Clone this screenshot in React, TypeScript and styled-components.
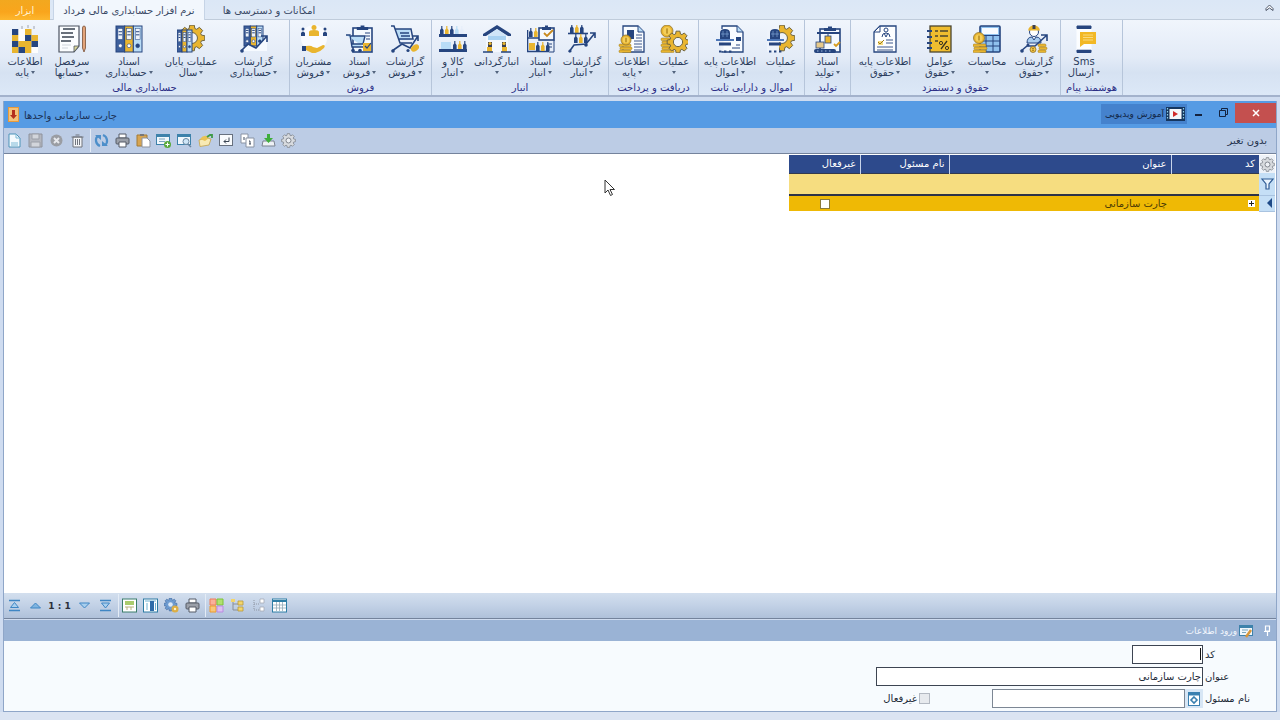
import React from 'react';
import styled, { createGlobalStyle } from 'styled-components';

const N = '#26457f';
const Y = '#e9b52f';
const L = '#b9dcf6';

const GlobalStyle = createGlobalStyle`
  *, *::before, *::after { box-sizing: border-box; }
  body { margin: 0; background: #cfdcf0; font-family: "DejaVu Sans", sans-serif; font-size: 10px; color: #2b3c5c; }
  button, input { font: inherit; color: inherit; margin: 0; padding: 0; border: 0; background: none; }
  button { cursor: default; }
  svg { display: block; flex: none; }
`;

const Page = styled.div`
  min-height: 100vh;
  display: flex;
  flex-direction: column;
  position: relative;
  overflow: hidden;
`;

/* ---------- ribbon ---------- */

const TabBar = styled.nav`
  height: 20px;
  flex: none;
  display: flex;
  background: linear-gradient(#dbe7f6, #dfe9f6);
  border-bottom: 1px solid #c0ccdb;
`;

const Tab = styled.button<{ $kind?: 'tool' | 'active'; $w: number }>`
  width: ${p => p.$w}px;
  height: 20px;
  direction: rtl;
  white-space: nowrap;
  color: ${p => (p.$kind === 'tool' ? '#fff3d0' : '#3a4a66')};
  background: ${p => (p.$kind === 'tool' ? 'linear-gradient(#f2a81f, #f9a51c 60%, #fdb72e)' : p.$kind === 'active' ? '#f2f7fd' : 'transparent')};
  border: ${p => (p.$kind === 'active' ? '1px solid #c6d4e6' : '0')};
  border-bottom: 0;
  border-top: 0;
  margin-right: ${p => (p.$kind === 'tool' ? 3 : 0)}px;
`;

const Collapse = styled.button`
  margin-left: auto;
  width: 22px;
  height: 16px;
  display: grid;
  place-items: center;
`;

const Ribbon = styled.div`
  height: 77px;
  flex: none;
  display: flex;
  background: linear-gradient(#f0f5fc, #e3ebf7 50%, #d6e2f2 70%, #dce8f7);
  border-bottom: 2px solid #a3b2cc;
`;

const Group = styled.section<{ $w: number }>`
  width: ${p => p.$w}px;
  flex: none;
  border-right: 1px solid #b6c5da;
  display: flex;
  flex-direction: column;
`;

const GroupItems = styled.div`
  display: flex;
  height: 61px;
`;

const GroupTitle = styled.h2`
  margin: 0;
  font-size: 10px;
  line-height: 15px;
  font-weight: 400;
  text-align: center;
  direction: rtl;
  color: #2c2f86;
  white-space: nowrap;
`;

const BigButton = styled.button<{ $w: number }>`
  width: ${p => p.$w}px;
  flex: none;
  padding-top: 5px;
  display: flex;
  flex-direction: column;
  align-items: center;
  font-size: 10px;
  line-height: 11px;
  white-space: nowrap;
`;

const Caption = styled.span`
  margin-top: 3px;
  direction: rtl;
`;

const SubCaption = styled.span`
  display: flex;
  align-items: center;
  gap: 2px;
  height: 11px;
`;

const Arrow = styled.span`
  border: 2px solid transparent;
  border-top: 3px solid #53647e;
  border-bottom: 0;
`;

/* ---------- window ---------- */

const Window = styled.main`
  flex: 1;
  display: flex;
  flex-direction: column;
  margin: 4px 3px 0;
  border: 1px solid #8fa6c8;
  border-top: 0;
`;

const TitleBar = styled.header`
  height: 27px;
  flex: none;
  display: flex;
  align-items: center;
  background: #569be4;
  padding-left: 4px;
`;

const WindowTitle = styled.h1`
  margin: 0 auto 0 5px;
  font-size: 10px;
  font-weight: 400;
  direction: rtl;
  color: #1c3358;
  padding-top: 1px;
`;

const VideoLink = styled.a`
  display: flex;
  align-items: center;
  gap: 2px;
  height: 20px;
  width: 86px;
  padding: 0 2px;
  justify-content: flex-end;
  background: #4582cd;
  color: #122748;
  text-decoration: none;
  font-size: 9px;
  white-space: nowrap;
  margin-bottom: 2px;
`;

const WinButton = styled.button<{ $close?: boolean }>`
  width: ${p => (p.$close ? 41 : 24)}px;
  height: 20px;
  margin-bottom: 4px;
  display: grid;
  place-items: center;
  background: ${p => (p.$close ? '#c4504f' : 'transparent')};
`;

const ToolBar = styled.div<{ $bottom?: boolean }>`
  height: 26px;
  flex: none;
  display: flex;
  align-items: center;
  background: ${p => (p.$bottom ? 'linear-gradient(#d3dfee, #c2d1e6 50%, #afc1da)' : '#bccce5')};
  border-bottom: 1px solid #74839c;
`;

const ToolGroup = styled.div<{ $sep?: boolean }>`
  display: flex;
  align-items: center;
  gap: 1px;
  height: 23px;
  padding-right: ${p => (p.$sep ? 3 : 0)}px;
  border-right: ${p => (p.$sep ? '1px solid #e4ecf6' : '0')};
`;

const ToolButton = styled.button`
  width: 20px;
  height: 20px;
  display: grid;
  place-items: center;
`;

const Counter = styled.output`
  width: 27px;
  text-align: center;
  font-size: 9px;
  font-weight: 700;
  color: #2b2f3a;
`;

const Status = styled.span`
  margin-left: auto;
  padding-right: 9px;
  direction: rtl;
  color: #26344f;
`;

const Content = styled.div`
  flex: 1;
  background: #fff;
  direction: rtl;
  padding: 1px 1px 0 0;
`;

const Table = styled.table`
  border-collapse: collapse;
  table-layout: fixed;
  width: 486px;
  direction: rtl;
  font-size: 10px;
`;

const Head = styled.th`
  height: 18px;
  padding: 0 4px;
  text-align: right;
  font-weight: 400;
  color: #fff;
  background: #2d4a8c;
  border-left: 1px solid #c8d4ea;
  &:last-child { border-left: 0; }
`;

const Corner = styled.th`
  padding: 0;
  background: #eef2f8;
`;

const FilterCell = styled.td`
  height: 22px;
  padding: 0;
  background: #f6dd80;
  border-top: 1px solid #333a4d;
  border-bottom: 2px solid #2c3247;
`;

const SideCell = styled.td`
  padding: 0;
  background: #c5dff6;
  border-bottom: 1px solid #a9c3e0;
`;

const Cell = styled.td`
  height: 16px;
  padding: 0 4px;
  background: #efb905;
  color: #4a3a05;
`;

const RowCheck = styled.input`
  appearance: none;
  display: block;
  width: 10px;
  height: 10px;
  margin: 0 auto;
  background: #fff;
  border: 1px solid #8a7a3a;
`;

const Expander = styled.button`
  display: block;
  width: 7px;
  height: 7px;
  background: #fff;
`;

/* ---------- entry panel ---------- */

const PanelHead = styled.header`
  margin-top: 1px;
  height: 21px;
  flex: none;
  display: flex;
  align-items: center;
  gap: 2px;
  direction: rtl;
  padding-right: 5px;
  background: #9ab3d5;
  color: #f3f7fd;
`;

const PanelTitle = styled.h2`
  margin: 0;
  font-size: 9px;
  font-weight: 400;
`;

const Pin = styled.button`
  width: 8px;
  height: 12px;
  margin-left: 8px;
`;

const Form = styled.form`
  flex: none;
  direction: rtl;
  background: #f7fbfe;
  display: flex;
  flex-direction: column;
  gap: 3px;
  padding: 4px 0 3px;
  color: #222a38;
`;

const FieldRow = styled.div`
  display: flex;
  align-items: center;
  height: 19px;
`;

const Label = styled.label`
  width: 73px;
  text-align: left;
  padding-left: 2px;
`;

const Box = styled.input<{ $w: number; $soft?: boolean }>`
  width: ${p => p.$w}px;
  height: 19px;
  padding: 0 1px;
  background: #fff;
  border: 1px solid ${p => (p.$soft ? '#7d8794' : '#3d4552')};
`;

const CodeWrap = styled.span`
  position: relative;
  display: flex;
`;

const TextCaret = styled.i`
  position: absolute;
  right: 2px;
  top: 3px;
  width: 1px;
  height: 12px;
  background: #111;
`;

const Lookup = styled.button`
  width: 18px;
  height: 19px;
  display: grid;
  place-items: center;
  background: #d7e6f5;
`;

const CheckLabel = styled.label`
  display: flex;
  align-items: center;
  gap: 2px;
  margin-right: 62px;
`;

const SoftCheck = styled.input`
  appearance: none;
  width: 11px;
  height: 11px;
  background: #e7eaee;
  border: 1px solid #b3b9c2;
`;

const BottomStrip = styled.footer`
  height: 8px;
  flex: none;
  background: #dbe4f2;
`;

const Pointer = styled.svg`
  position: absolute;
  left: 604px;
  top: 179px;
`;

/* ---------- drawings ---------- */

const Svg = ({ s = 28, v = 28, children }: { s?: number; v?: number; children: React.ReactNode }) => (
  <svg width={s} height={s} viewBox={`0 0 ${v} ${v}`} fill="none" aria-hidden="true">{children}</svg>
);

const gearPath = (cx: number, cy: number, r: number, teeth = 8) => {
  const pts: string[] = [];
  for (let i = 0; i < teeth; i++) {
    const a = (i * 2 * Math.PI) / teeth;
    const step = Math.PI / teeth;
    [[-0.75, 0.76], [-0.45, 1], [0.45, 1], [0.75, 0.76]].forEach(([o, k]) => {
      pts.push(`${(cx + Math.cos(a + o * step) * r * k).toFixed(2)} ${(cy + Math.sin(a + o * step) * r * k).toFixed(2)}`);
    });
  }
  return `M${pts.join('L')}Z`;
};

const Gear = ({ cx, cy, r, fill = Y, hole = '#eef3fb' }: { cx: number; cy: number; r: number; fill?: string; hole?: string }) => (
  <>
    <path d={gearPath(cx, cy, r)} fill={fill} stroke="#6f6540" strokeWidth="1" />
    <circle cx={cx} cy={cy} r={r * 0.42} fill={hole} stroke="#6f6540" strokeWidth="1" />
  </>
);

const Coins = ({ x, y, n = 3, w = 11 }: { x: number; y: number; n?: number; w?: number }) => (
  <>
    {Array.from({ length: n }, (_, i) => (
      <rect key={i} x={x + (i % 2)} y={y - i * 3} width={w} height="2.6" rx="1.2" fill={Y} stroke="#a88428" strokeWidth="0.6" />
    ))}
  </>
);

const Coin = ({ cx, cy, r = 5 }: { cx: number; cy: number; r?: number }) => (
  <>
    <circle cx={cx} cy={cy} r={r} fill={Y} stroke="#8f7430" strokeWidth="0.8" />
    <circle cx={cx} cy={cy} r={r * 0.65} fill="#f5cf5a" />
    <path d={`M${cx} ${cy - r * 0.5}v${r}M${cx - 1} ${cy - 1}h2M${cx - 1} ${cy + 1}h2`} stroke="#a87d18" strokeWidth="0.8" />
  </>
);

const Binders = ({ x, y, w, h }: { x: number; y: number; w: number; h: number }) => (
  <>
    {['#3c5f9c', Y, L].map((c, i) => {
      const bw = w / 3;
      const bx = x + i * bw;
      return (
        <g key={i}>
          <rect x={bx} y={y} width={bw} height={h} fill={c} stroke={N} />
          <rect x={bx + bw * 0.22} y={y + 2.5} width={bw * 0.56} height={h * 0.42} fill="#eef4fb" stroke={N} strokeWidth="0.5" />
          <path d={`M${bx + bw * 0.3} ${y + h * 0.22}h${bw * 0.4}M${bx + bw * 0.3} ${y + h * 0.34}h${bw * 0.4}`} stroke={N} strokeWidth="1" />
          <circle cx={bx + bw / 2} cy={y + h * 0.76} r={bw * 0.22} fill={i === 2 ? N : '#fff'} stroke={N} strokeWidth="0.6" />
        </g>
      );
    })}
  </>
);

const Bottles = ({ x, y, c }: { x: number; y: number; c: string[] }) => (
  <>
    {c.map((f, i) => (
      <path key={i} d={`M${x + i * 5} ${y}v-5l1.2-1.5v-2.5h1.2v2.5l1.2 1.5v5z`} fill={f} />
    ))}
  </>
);

const Trend = ({ d }: { d: string }) => <path d={d} stroke={N} strokeWidth="1.6" />;

const Page28 = ({ x = 3, y = 1, w = 21, h = 26 }: { x?: number; y?: number; w?: number; h?: number }) => (
  <>
    <path d={`M${x} ${y}h${w - 6}l6 6v${h - 6}h${-w}z`} fill="#f9fcff" stroke={N} strokeWidth="1.3" />
    <path d={`M${x + w - 6} ${y}v6h6`} fill={L} stroke={N} />
  </>
);

const Clipboard = ({ x, y, w, h }: { x: number; y: number; w: number; h: number }) => (
  <>
    <rect x={x} y={y} width={w} height={h} fill="#f4f9fe" stroke={N} strokeWidth="1.6" />
    <path d={`M${x + w * 0.2} ${y + 2}v-3h${w * 0.2}v-1.5h${w * 0.2}v1.5h${w * 0.2}v3z`} fill={N} />
  </>
);

const Helmet = ({ x }: { x: number }) => (
  <>
    <path d={`M${x + 4} 14V8q0-4 5-4t5 4v6z`} fill={N} />
    <path d={`M${x + 7} 6v6M${x + 11} 6v6M${x + 5} 9h8`} stroke="#7fa3d6" strokeWidth="0.7" />
    <rect x={x} y="14" width="18" height="2" fill="#4d77b8" />
    <rect x={x + 3} y="17.5" width="12" height="3" fill={N} />
    <path d={`M${x + 3} 26.5h2.4M${x + 8} 26.5h2.4M${x + 13} 26.5h2.4`} stroke={N} strokeWidth="2" />
  </>
);

const Gal: Record<string, React.ReactNode> = {
  info: (
    <Svg>
      {[
        [1, 4, N], [14, 4, Y],
        [1, 10, Y], [7.5, 10, '#fdfdfd'], [14, 10, N], [20.5, 10, Y], [7.5, 4, '#fdfdfd'],
        [1, 16, N], [7.5, 16, Y], [14, 16, Y], [20.5, 16, N],
        [1, 22, Y], [7.5, 22, N], [14, 22, Y], [20.5, 22, '#fdfdfd'],
      ].map(([x, y, f], i) => <rect key={i} x={x as number} y={y as number} width="6.5" height="6" fill={f as string} />)}
      <path d="M11 1v3M17 0v3M23 1v3" stroke="#8b90a0" strokeWidth="0.8" />
    </Svg>
  ),
  sheet: (
    <Svg>
      <path d="M1 1h20v20l-5 6H1z" fill="#fbfdff" stroke="#4b5361" strokeWidth="1.2" />
      <path d="M16 27v-6h5z" fill="#d9d69a" stroke="#4b5361" strokeWidth="0.8" />
      <path d="M5 4h12M3 8h12M4 12h12M3 16h10" stroke="#394150" strokeWidth="1.5" />
      <path d="M4 20h9M4 23h6" stroke="#cfd5dc" />
      <path d="M24.5 3q0-2 1.5-2t1.5 2v20l-1.5 4-1.5-4z" fill="#e3a47a" stroke="#7a5137" strokeWidth="0.8" />
    </Svg>
  ),
  binders: <Svg><Binders x={1} y={1} w={26} h={26} /></Svg>,
  yearEnd: <Svg><Gear cx={15} cy={13} r={13} /><Binders x={0} y={5} w={15} h={22} /></Svg>,
  accReport: (
    <Svg>
      <Binders x={4} y={1} w={19} h={20} />
      <path d="M2 26l7-7 7 4 11-11v14z" fill="#f6faff" />
      <Trend d="M1 26l7-7 8 4L27 11M21 11h6v6" />
      <circle cx="2" cy="26" r="1.8" fill={N} />
    </Svg>
  ),
  customers: (
    <Svg>
      <circle cx="14" cy="13" r="13" fill="#f9fbff" />
      <circle cx="14" cy="2.5" r="2.5" fill={Y} /><path d="M9 11V7q0-2 5-2t5 2v4z" fill={Y} />
      <circle cx="3" cy="4" r="1.5" fill={N} /><path d="M1 11V8q2-3 4 0v3z" fill={N} />
      <circle cx="25" cy="4" r="1.5" fill={N} /><path d="M23 11V8q2-3 4 0v3z" fill={N} />
      <path d="M2 21h4v5H2z" fill={N} />
      <path d="M6 21q5-1 7 1l4 1 6-3q3 0 1 3-6 6-12 5l-6-3z" fill={Y} />
    </Svg>
  ),
  saleDocs: (
    <Svg>
      <Clipboard x={7} y={3} w={19} h={24} />
      <path d="M0 10h4l2 12h12M5 11h14l-2 8H6" stroke={N} strokeWidth="1.4" fill={L} />
      <circle cx="7" cy="25.5" r="1.8" fill={N} /><circle cx="14" cy="25.5" r="1.8" fill={N} />
      <rect x="17" y="18" width="8" height="8" fill={Y} /><path d="M19 21l2 2 4-5" stroke={N} strokeWidth="1.2" />
      <path d="M19 8h5M20 11h4M20 14h4" stroke={N} />
    </Svg>
  ),
  saleReport: (
    <Svg>
      <path d="M5 4h14v11H8z" fill={L} />
      <path d="M0 1h3l6 17h12M4 4h16l2 10H8M9 8h9M10 11h9" stroke={N} strokeWidth="1.5" />
      <Trend d="M1 26l10-7 8 4L27 11M22 11h5v5" />
      <circle cx="2" cy="26" r="1.8" fill={N} /><circle cx="17" cy="25.5" r="1.6" fill={N} />
      <ellipse cx="24" cy="23" rx="4.5" ry="3" transform="rotate(-35 24 23)" fill={Y} />
    </Svg>
  ),
  goods: (
    <Svg>
      <Bottles x={1} y={10} c={[N, Y, N, L, '#e6eefa']} /><rect x="0" y="9" width="28" height="3" fill={N} />
      <rect x="2" y="17" width="10" height="8" fill={L} /><Bottles x={14} y={25} c={[N, Y, N]} /><rect x="0" y="24" width="28" height="3" fill={N} />
    </Svg>
  ),
  stocktaking: (
    <Svg>
      <path d="M14 0L0 9v2h3l11-7 11 7h3V9z" fill={N} /><path d="M14 4L4 11h20z" fill="#cfe5f8" />
      <path d="M3 11h22v16H3z" fill="#f4f8fd" />
      <path d="M5 11h18v4H5z" fill="#a9d2f2" />
      <path d="M5 17h4v10H5zM19 17h4v10h-4z" fill="#3a3f50" /><path d="M4 22h5v5H4zM19 22h5v5h-5z" fill={Y} />
      <circle cx="7" cy="18.5" r="1.6" fill={Y} /><circle cx="21" cy="18.5" r="1.6" fill={Y} />
      <path d="M0 27h10M18 27h10" stroke={N} strokeWidth="1.6" />
    </Svg>
  ),
  stockDocs: (
    <Svg>
      <Bottles x={2} y={12} c={[N, Y]} /><path d="M0 13h12M0 26.5h22M0.5 5v22" stroke={N} strokeWidth="1.6" />
      <rect x="2" y="18" width="6" height="7" fill={Y} /><Bottles x={9} y={26} c={[N, Y, N]} />
      <Clipboard x={12} y={3} w={15} h={12} /><path d="M17 8l3 3 6-6" stroke="#c88a1e" strokeWidth="1.8" />
      <path d="M27 15v12h-5M20 19h5M20 22h5" stroke={N} />
    </Svg>
  ),
  stockReport: (
    <Svg>
      <Bottles x={2} y={8} c={[N, Y, N]} /><path d="M0 8.5h20" stroke={N} strokeWidth="1.6" />
      <Bottles x={6} y={18} c={[N, Y, N]} />
      <Trend d="M1 27l5-7 12-1L27 8M22 8h5v5" /><circle cx="2" cy="26" r="1.6" fill={N} /><circle cx="18" cy="20" r="1.8" fill={N} />
    </Svg>
  ),
  payInfo: (
    <Svg>
      <Page28 x={5} y={1} w={21} h={26} />
      <path d="M9 5h7v9H9z" fill={N} /><path d="M18 10h6M18 13h6M16 16h8M16 19h8M16 22h8M16 25h8" stroke={N} strokeWidth="0.9" />
      <Coins x={1} y={25} n={3} w={12} /><Coin cx={8} cy={15} r={5} />
    </Svg>
  ),
  payOps: <Svg><Coins x={1} y={25} n={5} w={13} /><Coin cx={7} cy={6} r={6} /><Gear cx={18} cy={17} r={11} /></Svg>,
  assetInfo: (
    <Svg>
      <Page28 x={6} y={1} w={21} h={26} /><path d="M6 4v22" stroke="#eef3fb" strokeWidth="3" />
      <path d="M20 12h5v4h-5z" fill={N} /><path d="M16 23h8M20 20h4" stroke={N} />
      <Helmet x={0} />
    </Svg>
  ),
  assetOps: (
    <Svg><Gear cx={15} cy={13} r={13} /><rect x="0" y="1" width="12" height="26" fill="#eef3fb" /><Helmet x={-1} /></Svg>
  ),
  production: (
    <Svg>
      <Clipboard x={6} y={4} w={20} h={23} /><path d="M3 8h23" stroke={N} strokeWidth="2" />
      <rect x="2" y="17" width="8" height="6" fill="#e6c98a" stroke={N} strokeWidth="0.8" /><rect x="11" y="11" width="6" height="7" fill={Y} stroke={N} strokeWidth="0.8" />
      <path d="M14 8v3" stroke={N} /><path d="M20 19l2 2 4-4" stroke="#d79c1f" strokeWidth="1.8" />
      <rect x="0" y="24" width="22" height="4" rx="2" fill={N} /><path d="M3 26h16" stroke="#9db8df" strokeDasharray="1.5 2.5" />
    </Svg>
  ),
  payrollInfo: (
    <Svg>
      <path d="M9 1h16v26H3V7z" fill="#fdfeff" stroke={N} strokeWidth="1.3" /><path d="M9 1v6H3z" fill="#fff" stroke={N} />
      <circle cx="15" cy="5" r="2" stroke={N} /><path d="M11 12q0-4 4-4t4 4M13 8l2 4 2-4" stroke={N} />
      <rect x="7" y="16" width="5" height="4" fill="#f6dd80" /><path d="M7 17l2 2 4-4" stroke="#9a7a20" />
      <path d="M15 15h7M15 18h7M6 22h16M6 25h16" stroke={N} strokeWidth="0.9" />
    </Svg>
  ),
  factors: (
    <Svg>
      <rect x="4" y="1" width="21" height="26" fill="#f0bd2f" stroke="#4b4630" strokeWidth="1.3" />
      <path d="M9 6h3M14 6h8M9 11h3M14 11h8M9 16h3" stroke="#4b4630" strokeWidth="1.6" />
      <path d="M21 16l-6 8" stroke="#3a3520" strokeWidth="1.3" /><circle cx="15" cy="18" r="1.6" stroke="#3a3520" /><circle cx="21" cy="23" r="1.6" stroke="#3a3520" />
      <path d="M1 6h5M1 12h5M1 18h5M1 23h5" stroke={N} strokeWidth="1.8" />
    </Svg>
  ),
  calc: (
    <Svg>
      <rect x="7" y="1" width="20" height="26" rx="1" fill="#8fc1ee" stroke={N} strokeWidth="1.6" /><rect x="9" y="3" width="16" height="6" fill="#f7fbff" />
      <path d="M7 10.5h20M7 16h20M7 21h20M13 11v16M20 11v16" stroke={N} /><Coins x={0} y={25} n={3} w={13} /><Coin cx={6} cy={13} r={5.5} />
    </Svg>
  ),
  payrollReport: (
    <Svg>
      <circle cx="14" cy="7" r="4.5" fill="#fff" stroke={N} /><path d="M8 5.5q1-5 6-5t6 5z" fill={Y} /><path d="M12.5 0h3v4h-3z" fill="#3a3f50" />
      <path d="M7 18q0-6 5-6l2 3 2-3q5 0 5 6z" fill="#a9cdf0" stroke={N} />
      <Trend d="M1 26l6-5 8 0L27 10M21 10h6v6" /><circle cx="2" cy="26" r="1.8" fill={N} /><circle cx="8" cy="20" r="1.5" fill={N} />
      <Coin cx={13} cy={24.5} r={3} /><Coins x={18} y={25} n={3} w={8} />
    </Svg>
  ),
  sms: (
    <Svg>
      <path d="M7 1h14v2.5H7zM7 25h14v2.5H7z" fill={N} stroke={N} /><rect x="6.5" y="4" width="15" height="20.5" fill="#fbfdff" />
      <path d="M10 7h16v12H14l-4 3z" fill="#f2b825" /><path d="M13 10h10M13 12.5h10M13 15h10" stroke="#f9da80" />
    </Svg>
  ),
};

const Small: Record<string, React.ReactNode> = {
  new: <Svg s={15} v={15}><path d="M2 1h7l4 4v9H2z" fill="#f4fafe" stroke="#4d93b8" /><path d="M9 1v4h4M4 10h7M4 12h7" stroke="#7db9d6" /></Svg>,
  save: <Svg s={15} v={15}><path d="M1 1h13v13H1z" fill="#b4b7bf" stroke="#8e929c" /><path d="M4 1h7v5H4zM3 9h9v5H3z" fill="#d2d5db" stroke="#9b9fa8" /></Svg>,
  cancel: <Svg s={15} v={15}><circle cx="7.5" cy="7.5" r="6" fill="#9a9da3" /><path d="M5 5l5 5M10 5l-5 5" stroke="#e6e8ec" strokeWidth="2" /></Svg>,
  trash: <Svg s={15} v={15}><path d="M3 4h9v10H3z" fill="#f2f4f7" stroke="#71757d" /><path d="M1.5 4h12M5.5 2h4M5.5 6v6M7.5 6v6M9.5 6v6" stroke="#71757d" /></Svg>,
  refresh: <Svg s={15} v={15}><path d="M6 13C1 11 1 5 4 3M9 2c5 2 5 8 2 10" stroke="#4d8fca" strokeWidth="2.2" /><path d="M1 2h6v5zM14 13H8V8z" fill="#4d8fca" /></Svg>,
  print: <Svg s={15} v={15}><path d="M4 1h7v4H4z" fill="#fff" stroke="#555b66" /><rect x="1" y="5" width="13" height="6" rx="1" fill="#9ba0a9" stroke="#555b66" /><path d="M4 9h7v5H4z" fill="#fff" stroke="#555b66" /></Svg>,
  paste: <Svg s={15} v={15}><path d="M1 2h10v11H1z" fill="#d7a552" stroke="#a37a35" /><path d="M4 1h4v2H4z" fill="#777" /><path d="M6 5h5l3 3v6H6z" fill="#fff" stroke="#8c93a0" /></Svg>,
  addForm: <Svg s={15} v={15}><rect x="0.5" y="1.5" width="13" height="10" fill="#f0f7fc" stroke="#3d82ab" /><path d="M1 3h12" stroke="#3d82ab" strokeWidth="2" /><path d="M3 6h6M3 8.5h6" stroke="#7ba5bd" /><circle cx="11.5" cy="11.5" r="3.5" fill="#58a93a" /><path d="M11.5 9.5v4M9.5 11.5h4" stroke="#fff" /></Svg>,
  findForm: <Svg s={15} v={15}><rect x="0.5" y="1.5" width="13" height="10" fill="#f0f7fc" stroke="#3d82ab" /><path d="M1 3h12" stroke="#3d82ab" strokeWidth="2" /><circle cx="9" cy="8.5" r="3" fill="#cfe6f7" stroke="#6785a0" /><path d="M11 11l3 3" stroke="#6785a0" strokeWidth="1.5" /></Svg>,
  card: <Svg s={15} v={15}><path d="M1 7l8-2 4 1-2 6-9 1.5z" fill="#f8eab4" stroke="#c4a24a" strokeWidth="0.8" /><path d="M2 6q3-4 7-3l2 2-4 3z" fill="#e9c255" /><path d="M9 4l3-2h2v3" stroke="#3f9a48" strokeWidth="1.8" /></Svg>,
  enter: <Svg s={15} v={15}><rect x="0.5" y="1.5" width="13" height="11" fill="#f9fbfd" stroke="#68717f" /><path d="M10 4.5v4H5M7 6.5l-2 2 2 2" stroke="#3c4654" /></Svg>,
  copy: <Svg s={15} v={15}><path d="M1 1h7v9H1z" fill="#fff" stroke="#8993a3" /><path d="M6 5h8v9H6z" fill="#fff" stroke="#8993a3" /><path d="M4 4v3M10 8v3M9 8h1M9 11h2" stroke="#3f4a5c" /></Svg>,
  import: <Svg s={15} v={15}><path d="M2 8h11l1 5H1z" fill="#eef1f5" stroke="#7b8390" /><path d="M6 1h3v4h3l-4.5 5L3 5h3z" fill="#3fae3c" /></Svg>,
  gear: <Svg s={15} v={15}><path d={gearPath(7.5, 7.5, 7)} fill="#d8dbdf" stroke="#81868e" strokeWidth="0.8" /><circle cx="7.5" cy="7.5" r="2.5" fill="#eef1f5" stroke="#81868e" /></Svg>,
  first: <Svg s={13} v={13}><path d="M1 1.5h11M1 11.5h11" stroke="#3f86c4" strokeWidth="1.6" /><path d="M6.5 3.5l4 5h-8z" fill="#a8cfee" stroke="#3f86c4" /></Svg>,
  prev: <Svg s={13} v={13}><path d="M6.5 4l5 5h-10z" fill="#7fb4e0" stroke="#3f86c4" /></Svg>,
  next: <Svg s={13} v={13}><path d="M6.5 9l-5-5h10z" fill="#a8cfee" stroke="#3f86c4" /></Svg>,
  last: <Svg s={13} v={13}><path d="M1 1.5h11M1 11.5h11" stroke="#3f86c4" strokeWidth="1.6" /><path d="M6.5 9l-4-5h8z" fill="#a8cfee" stroke="#3f86c4" /></Svg>,
  form: <Svg s={15} v={15}><rect x="0.5" y="1" width="14" height="13" fill="#fff" stroke="#3a7d6a" /><path d="M3 4h9M3 6h9" stroke="#8dbb3c" strokeWidth="1.5" /><path d="M3 9h9M5 9v3M9 9v3" stroke="#b9b27c" /></Svg>,
  columns: <Svg s={15} v={15}><rect x="0.5" y="1" width="14" height="13" fill="#fff" stroke="#2d7ba3" /><path d="M2 3h11M4 5v7M12.5 5v7" stroke="#6fb1d3" /><rect x="7" y="3" width="4" height="10" fill="#2e6ba8" /></Svg>,
  gearLock: <Svg s={15} v={15}><path d={gearPath(6.5, 6.5, 6.5)} fill="#6d9bd0" stroke="#466fa3" strokeWidth="0.7" /><circle cx="6.5" cy="6.5" r="2.3" fill="#dce9f7" /><circle cx="11" cy="11" r="3.5" fill="#dcae45" /><circle cx="11" cy="11" r="1.2" fill="#fff3c8" /></Svg>,
  tiles: <Svg s={15} v={15}><path d="M1 1h6v6H1z" fill="#f9b09a" stroke="#ee7d5c" /><path d="M8 1h6v6H8z" fill="#b0e070" stroke="#7cc436" /><path d="M1 8h6v6H1z" fill="#f8c77c" stroke="#ee9a2c" /><path d="M8 8h6v6H8z" fill="#dcc0f2" stroke="#b98be0" /></Svg>,
  treeOpen: <Svg s={15} v={15}><path d="M3 2v10h5M3 6h5" stroke="#8a8f98" /><path d="M8 3h5v4H8zM8 9h5v4H8z" fill="#f3d56c" stroke="#b89a3c" strokeWidth="0.8" /><path d="M1 1h4v3H1z" fill="#f3d56c" /></Svg>,
  treeClosed: <Svg s={15} v={15}><path d="M3 2v10h5M3 6h5" stroke="#8f96a3" strokeDasharray="1 1" /><path d="M9 1h4v4H9zM9 9h4v4H9z" fill="#fff" stroke="#a4aab5" strokeWidth="0.8" /></Svg>,
  grid: <Svg s={15} v={15}><rect x="0.5" y="1" width="14" height="13" fill="#fff" stroke="#2f7ea6" /><path d="M1 3h13" stroke="#2f7ea6" strokeWidth="2" /><path d="M1 7h13M1 10h13M4.5 4v9M7.5 4v9M10.5 4v9" stroke="#93a9b8" strokeWidth="0.8" /></Svg>,
};

/* ---------- data ---------- */

type Item = [icon: string, width: number, top: string, sub: string];

const groups: { title: string; w: number; items: Item[] }[] = [
  {
    title: 'حسابداری مالی', w: 290,
    items: [['info', 50, 'اطلاعات', 'پایه'], ['sheet', 44, 'سرفصل', 'حسابها'], ['binders', 70, 'اسناد', 'حسابداری'], ['yearEnd', 54, 'عملیات پایان', 'سال'], ['accReport', 71, 'گزارشات', 'حسابداری']],
  },
  { title: 'فروش', w: 142, items: [['customers', 47, 'مشتریان', 'فروش'], ['saleDocs', 45, 'اسناد', 'فروش'], ['saleReport', 46, 'گزارشات', 'فروش']] },
  { title: 'انبار', w: 177, items: [['goods', 42, 'کالا و', 'انبار'], ['stocktaking', 45, 'انبارگردانی', ''], ['stockDocs', 43, 'اسناد', 'انبار'], ['stockReport', 40, 'گزارشات', 'انبار']] },
  { title: 'دریافت و پرداخت', w: 90, items: [['payInfo', 46, 'اطلاعات', 'پایه'], ['payOps', 38, 'عملیات', '']] },
  { title: 'اموال و دارایی ثابت', w: 106, items: [['assetInfo', 62, 'اطلاعات پایه', 'اموال'], ['assetOps', 40, 'عملیات', '']] },
  { title: 'تولید', w: 46, items: [['production', 45, 'اسناد', 'تولید']] },
  { title: 'حقوق و دستمزد', w: 210, items: [['payrollInfo', 68, 'اطلاعات پایه', 'حقوق'], ['factors', 42, 'عوامل', 'حقوق'], ['calc', 52, 'محاسبات', ''], ['payrollReport', 42, 'گزارشات', 'حقوق']] },
  { title: 'هوشمند پیام', w: 62, items: [['sms', 46, 'Sms', 'ارسال']] },
];

const Tools = ({ icons, sep }: { icons: [string, string][]; sep?: boolean }) => (
  <ToolGroup $sep={sep}>
    {icons.map(([icon, name]) => <ToolButton key={name} type="button" aria-label={name}>{Small[icon]}</ToolButton>)}
  </ToolGroup>
);

export default function App() {
  return (
    <Page>
      <GlobalStyle />
      <TabBar>
        <Tab $kind="tool" $w={50}>ابزار</Tab>
        <Tab $kind="active" $w={152}>نرم افزار حسابداری مالی فرداد</Tab>
        <Tab $w={128}>امکانات و دسترسی ها</Tab>
        <Collapse aria-label="جمع کردن">
          <svg width="9" height="8" viewBox="0 0 9 8" fill="none"><path d="M1 4.5L4.5 1 8 4.5V6.500L4.500 4 1 6.500z" fill="#fff" stroke="#4b5568" /></svg>
        </Collapse>
      </TabBar>
      <Ribbon>
        {groups.map(g => (
          <Group key={g.title} $w={g.w}>
            <GroupItems>
              {g.items.map(([icon, w, top, sub]) => (
                <BigButton key={icon} $w={w} type="button">
                  {Gal[icon]}
                  <Caption>{top}</Caption>
                  <SubCaption>{sub && <span>{sub}</span>}<Arrow /></SubCaption>
                </BigButton>
              ))}
            </GroupItems>
            <GroupTitle>{g.title}</GroupTitle>
          </Group>
        ))}
      </Ribbon>

      <Window>
        <TitleBar>
          <svg width="11" height="15" viewBox="0 0 11 15"><rect width="11" height="15" fill="#e79a3c" /><rect x="1" y="1" width="9" height="13" fill="#f4c27a" /><path d="M4 3h3v5h2l-3.5 4L2 8h2z" fill="#b5301d" /></svg>
          <WindowTitle>چارت سازمانی واحدها</WindowTitle>
          <VideoLink href="#video">
            <span>آموزش ویدیویی</span>
            <svg width="19" height="14" viewBox="0 0 19 14"><rect width="19" height="14" fill="#16365f" /><rect x="3.5" y="2" width="12" height="10" fill="#f4f7fb" /><path d="M7 4l5 3-5 3z" fill="#d02a2a" /><path d="M1.5 1v12M17.5 1v12" stroke="#8fd0e8" strokeWidth="1.2" strokeDasharray="1.5 1.5" /></svg>
          </VideoLink>
          <WinButton aria-label="کوچک کردن"><svg width="8" height="8"><rect y="5" width="7" height="2" fill="#14233f" /></svg></WinButton>
          <WinButton aria-label="بازگرداندن"><svg width="9" height="9" viewBox="0 0 9 9" fill="none"><path d="M.5 2.5h6v6h-6zM2.5 2V.5h6v6H7" stroke="#14233f" /></svg></WinButton>
          <WinButton $close aria-label="بستن"><svg width="8" height="8" viewBox="0 0 8 8"><path d="M1 1l6 6M7 1L1 7" stroke="#fff" strokeWidth="1.5" /></svg></WinButton>
        </TitleBar>
        <ToolBar>
          <Tools sep icons={[['new', 'جدید'], ['save', 'ذخیره'], ['cancel', 'انصراف'], ['trash', 'حذف']]} />
          <Tools icons={[['refresh', 'بازخوانی'], ['print', 'چاپ'], ['paste', 'چسباندن']]} />
          <Tools icons={[['addForm', 'افزودن فرم'], ['findForm', 'جستجو'], ['card', 'کارت'], ['enter', 'ورود'], ['copy', 'کپی'], ['import', 'دریافت']]} />
          <Tools icons={[['gear', 'تنظیمات']]} />
          <Status>بدون تغیر</Status>
        </ToolBar>
        <Content>
          <Table>
            <colgroup>
              <col style={{ width: 16 }} /><col style={{ width: 88 }} /><col style={{ width: 222 }} /><col style={{ width: 89 }} /><col />
            </colgroup>
            <thead>
              <tr>
                <Corner>{Small.gear}</Corner>
                <Head>کد</Head><Head>عنوان</Head><Head>نام مسئول</Head><Head>غیرفعال</Head>
              </tr>
            </thead>
            <tbody>
              <tr>
                <SideCell><svg width="15" height="14" viewBox="0 0 15 14"><path d="M2 2h11L9 7v5H6V7z" fill="#e8f3fd" stroke="#2d5a94" strokeWidth="1.2" /></svg></SideCell>
                <FilterCell colSpan={4} />
              </tr>
              <tr>
                <SideCell><svg width="15" height="14" viewBox="0 0 15 14"><path d="M12 2v10L7 7z" fill="#1f4a87" /></svg></SideCell>
                <Cell><Expander aria-label="باز کردن"><svg width="7" height="7" viewBox="0 0 7 7"><path d="M3.5 1v5M1 3.5h5" stroke="#222" /></svg></Expander></Cell>
                <Cell>چارت سازمانی</Cell>
                <Cell />
                <Cell><RowCheck type="checkbox" aria-label="غیرفعال" /></Cell>
              </tr>
            </tbody>
          </Table>
        </Content>
        <ToolBar $bottom>
          <ToolGroup $sep>
            <ToolButton type="button" aria-label="اولین">{Small.first}</ToolButton>
            <ToolButton type="button" aria-label="قبلی">{Small.prev}</ToolButton>
            <Counter>1 : 1</Counter>
            <ToolButton type="button" aria-label="بعدی">{Small.next}</ToolButton>
            <ToolButton type="button" aria-label="آخرین">{Small.last}</ToolButton>
          </ToolGroup>
          <Tools sep icons={[['form', 'فرم'], ['columns', 'ستونها'], ['gearLock', 'تنظیم'], ['print', 'چاپ']]} />
          <Tools icons={[['tiles', 'کاشی'], ['treeOpen', 'باز کردن درخت'], ['treeClosed', 'بستن درخت'], ['grid', 'جدول']]} />
        </ToolBar>

        <PanelHead>
          <Pin aria-label="سنجاق"><svg width="8" height="11" viewBox="0 0 8 11" fill="none"><path d="M2.5 1h4v5h-4zM1 6.5h6M4.5 7v4" stroke="#fff" strokeWidth="1.2" /></svg></Pin>
          <svg width="14" height="14" viewBox="0 0 14 14" fill="none"><rect x="0.5" y="1.5" width="13" height="10" fill="#f0f7fc" stroke="#3d82ab" /><path d="M1 3h12" stroke="#3d82ab" strokeWidth="2" /><path d="M3 6h6M3 8.5h4" stroke="#7ba5bd" /><path d="M12 6l-5 7" stroke="#d9963a" strokeWidth="2.5" /></svg>
          <PanelTitle>ورود اطلاعات</PanelTitle>
        </PanelHead>
        <Form>
          <FieldRow>
            <Label htmlFor="code">کد</Label>
            <CodeWrap><Box id="code" $w={71} /><TextCaret /></CodeWrap>
          </FieldRow>
          <FieldRow>
            <Label htmlFor="title">عنوان</Label>
            <Box id="title" $w={327} defaultValue="چارت سازمانی" />
          </FieldRow>
          <FieldRow>
            <Label htmlFor="owner">نام مسئول</Label>
            <Lookup type="button" aria-label="انتخاب مسئول"><svg width="12" height="14" viewBox="0 0 12 14" fill="none"><rect x="0.5" y="0.5" width="11" height="13" fill="#fff" stroke="#3a80b0" /><path d="M1 2h10" stroke="#3a80b0" strokeWidth="3" /><path d="M6 5l3 3-3 3-3-3z" stroke="#3a80b0" strokeWidth="1.6" /></svg></Lookup>
            <Box id="owner" $w={193} $soft />
            <CheckLabel><SoftCheck type="checkbox" />غیرفعال</CheckLabel>
          </FieldRow>
        </Form>
      </Window>
      <BottomStrip />
      <Pointer width="12" height="18" viewBox="0 0 12 18"><path d="M1 1v13l3-3 2.5 5.5 2-1L6 10.500h4.500z" fill="#fff" stroke="#333" /></Pointer>
    </Page>
  );
}
